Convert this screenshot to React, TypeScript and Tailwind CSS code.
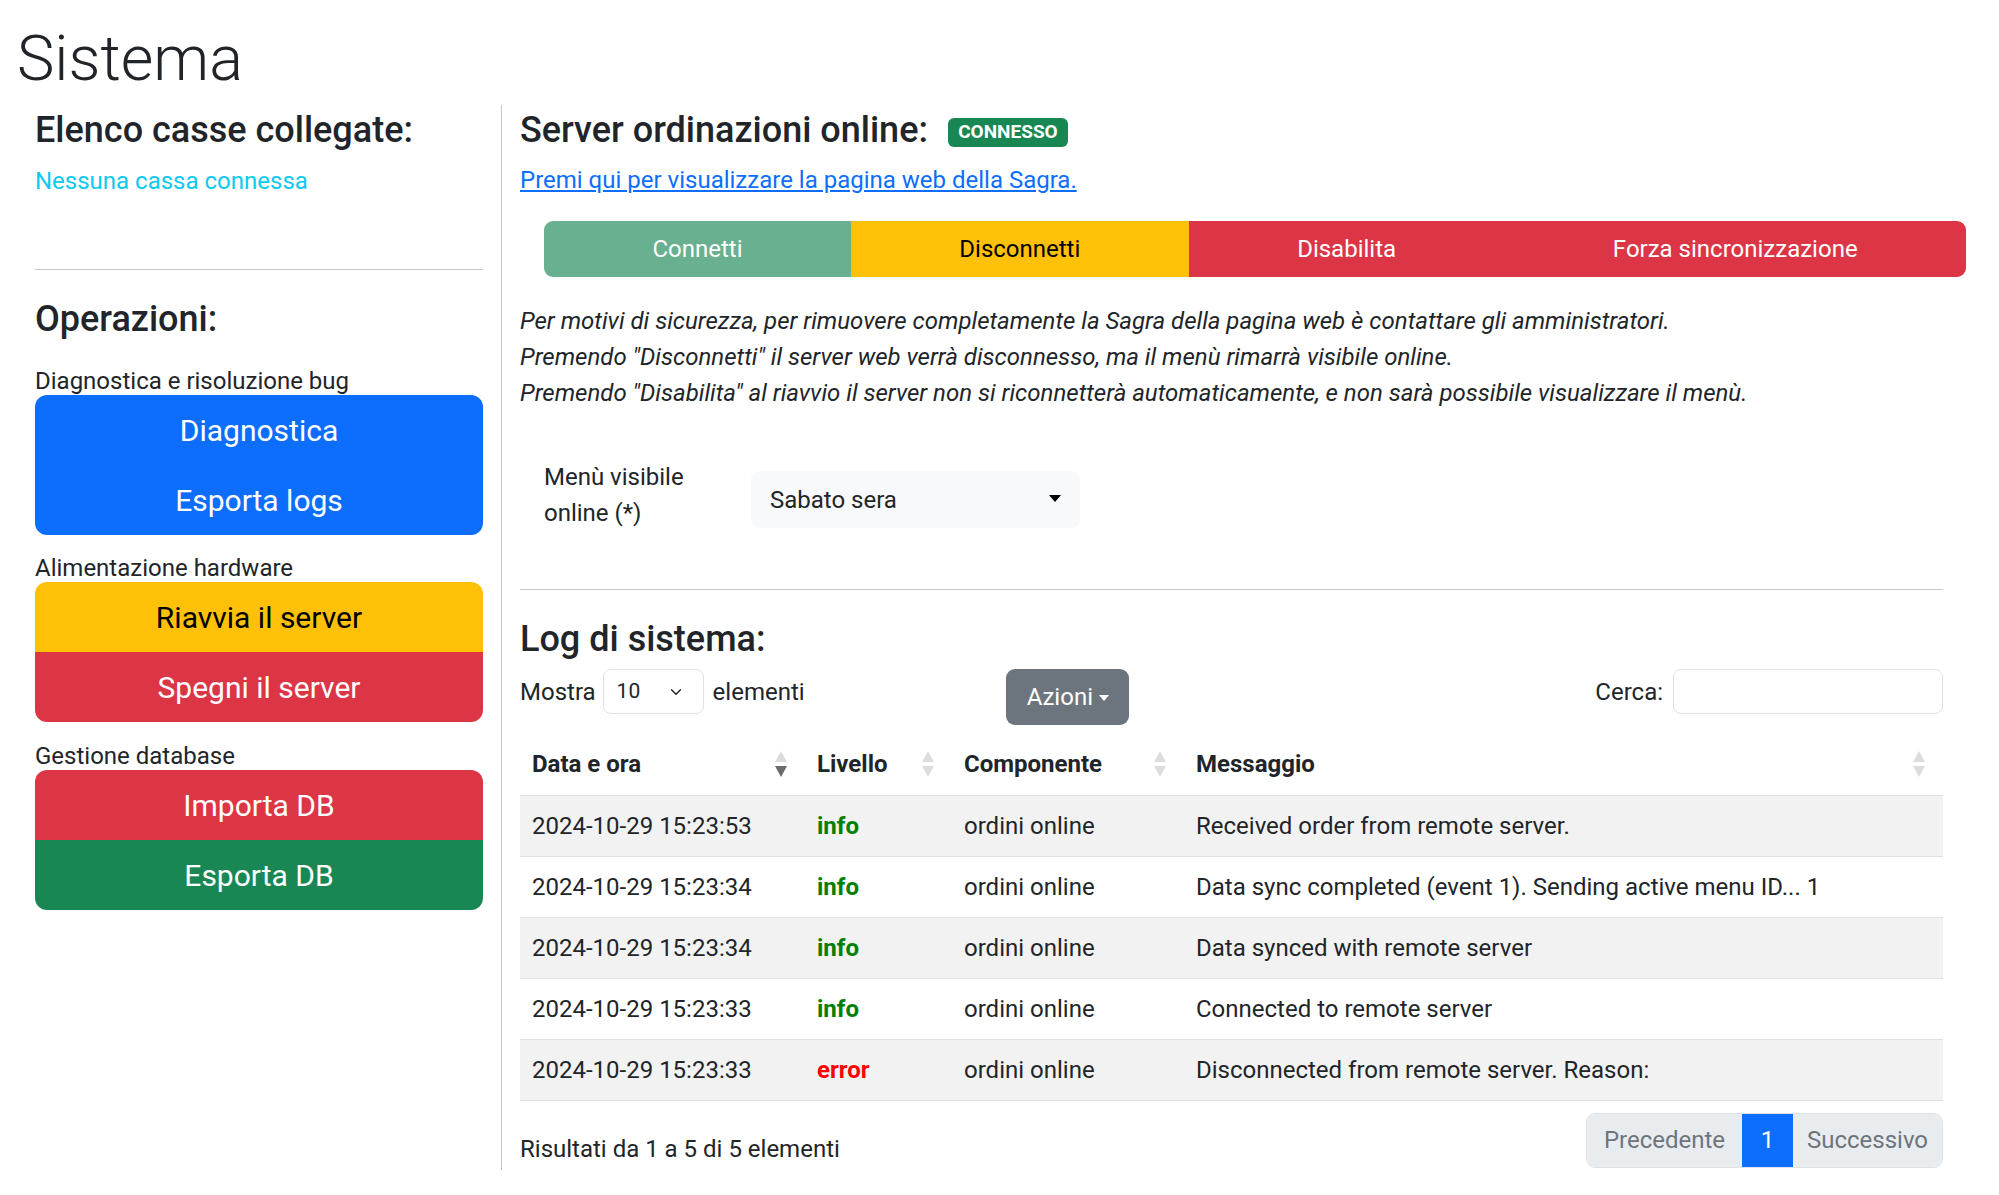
import { ChevronDown } from "lucide-react";

type Log = { ts: string; level: "info" | "error"; comp: string; msg: string };

const logs: Log[] = [
  { ts: "2024-10-29 15:23:53", level: "info", comp: "ordini online", msg: "Received order from remote server." },
  { ts: "2024-10-29 15:23:34", level: "info", comp: "ordini online", msg: "Data sync completed (event 1). Sending active menu ID... 1" },
  { ts: "2024-10-29 15:23:34", level: "info", comp: "ordini online", msg: "Data synced with remote server" },
  { ts: "2024-10-29 15:23:33", level: "info", comp: "ordini online", msg: "Connected to remote server" },
  { ts: "2024-10-29 15:23:33", level: "error", comp: "ordini online", msg: "Disconnected from remote server. Reason:" },
];

function SortIcon({ active = false }: { active?: boolean }) {
  return (
    <svg width="12" height="28" viewBox="0 0 12 28" className="shrink-0">
      <polygon points="6,1 12,12 0,12" fill="#dcdcdc" />
      <polygon points="0,16 12,16 6,27" fill={active ? "#6b6b6b" : "#dcdcdc"} />
    </svg>
  );
}

function Caret({ className = "" }: { className?: string }) {
  return (
    <svg width="12" height="7" viewBox="0 0 12 7" className={className}>
      <polygon points="0,0 12,0 6,7" fill="currentColor" />
    </svg>
  );
}

function GroupLabel({ children, className = "" }: { children: string; className?: string }) {
  return <div className={"text-[24px] leading-[28px] " + className}>{children}</div>;
}

export default function App() {
  return (
    <div className="min-h-[1195px] bg-white font-['Roboto',sans-serif] text-[24px] text-[#212529]">
      <div className="pt-[21px] pl-[17px]">
        <h1 className="text-[63px] font-light leading-[76px]">Sistema</h1>
      </div>

      <div className="mt-[8px] flex items-start">
        {/* colonna sinistra */}
        <div className="ml-[35px] w-[448px] shrink-0">
          <h3 className="mt-[4px] text-[36px] font-medium leading-[42px]">Elenco casse collegate:</h3>
          <p className="mt-[12px] leading-[36px] text-[#0dcaf0]">Nessuna cassa connessa</p>
          <hr className="mt-[70px] border-t border-[#c8c9ca]" />
          <h3 className="mt-[28px] text-[36px] font-medium leading-[42px]">Operazioni:</h3>

          <GroupLabel className="mt-[27px]">Diagnostica e risoluzione bug</GroupLabel>
          <div className="flex flex-col overflow-hidden rounded-[12px] text-[30px] text-white">
            <button className="h-[70px] bg-[#0d6efd]">Diagnostica</button>
            <button className="h-[70px] bg-[#0d6efd]">Esporta logs</button>
          </div>

          <GroupLabel className="mt-[19px]">Alimentazione hardware</GroupLabel>
          <div className="flex flex-col overflow-hidden rounded-[12px] text-[30px]">
            <button className="h-[70px] bg-[#ffc107] text-black">Riavvia il server</button>
            <button className="h-[70px] bg-[#dc3545] text-white">Spegni il server</button>
          </div>

          <GroupLabel className="mt-[20px]">Gestione database</GroupLabel>
          <div className="flex flex-col overflow-hidden rounded-[12px] text-[30px] text-white">
            <button className="h-[70px] bg-[#dc3545]">Importa DB</button>
            <button className="h-[70px] bg-[#198754]">Esporta DB</button>
          </div>
        </div>

        {/* colonna destra */}
        <div className="ml-[18px] w-[1442px] shrink-0 border-l border-[#c4c4c4] pb-[2px] pl-[18px]">
          <div className="mt-[4px] flex h-[42px] items-center gap-[20px]">
            <h3 className="text-[36px] font-medium leading-[42px]">Server ordinazioni online:</h3>
            <span className="mt-[4px] flex h-[29px] w-[120px] items-center justify-center rounded-[6px] bg-[#198754] text-[19px] font-bold uppercase text-white">
              Connesso
            </span>
          </div>
          <a href="#" className="mt-[11px] block w-fit leading-[36px] text-[#0d6efd] underline">
            Premi qui per visualizzare la pagina web della Sagra.
          </a>

          <div className="mt-[23px] mr-[-23px] ml-[24px] flex h-[56px] overflow-hidden rounded-[9px]">
            <button className="flex-auto bg-[#68b08f] px-[18px] text-white">Connetti</button>
            <button className="flex-auto bg-[#ffc107] px-[18px] text-black">Disconnetti</button>
            <button className="flex-auto bg-[#dc3545] px-[18px] text-white">Disabilita</button>
            <button className="flex-auto bg-[#dc3545] px-[18px] text-white">Forza sincronizzazione</button>
          </div>

          <div className="mt-[26px] italic leading-[36px]">
            <p>Per motivi di sicurezza, per rimuovere completamente la Sagra della pagina web è contattare gli amministratori.</p>
            <p>Premendo "Disconnetti" il server web verrà disconnesso, ma il menù rimarrà visibile online.</p>
            <p>Premendo "Disabilita" al riavvio il server non si riconnetterà automaticamente, e non sarà possibile visualizzare il menù.</p>
          </div>

          <div className="mt-[48px] flex items-start">
            <label className="ml-[24px] w-[207px] leading-[36px]">
              Menù visibile
              <br />
              online (*)
            </label>
            <div className="mt-[12px] flex h-[57px] w-[329px] items-center justify-between rounded-[9px] bg-[#f8f9fa] pr-[19px] pl-[19px]">
              <span>Sabato sera</span>
              <Caret className="mb-[3px] text-black" />
            </div>
          </div>

          <hr className="mt-[58px] border-t border-[#c8c9ca]" />
          <h3 className="mt-[28px] text-[36px] font-medium leading-[42px]">Log di sistema:</h3>

          <div className="mt-[9px] grid grid-cols-3 items-start">
            <div className="flex h-[45px] items-center">
              <span>Mostra</span>
              <div className="ml-[7px] flex h-[45px] w-[101px] items-center justify-between rounded-[8px] border border-[#dee2e6] pr-[18px] pl-[13px] text-[21px]">
                <span>10</span>
                <ChevronDown size={18} strokeWidth={2} />
              </div>
              <span className="ml-[9px]">elementi</span>
            </div>
            <div className="pl-[12px]">
              <button className="flex h-[56px] w-[123px] items-center justify-center gap-[6px] rounded-[9px] bg-[#6c757d] text-white">
                Azioni
                <Caret className="mt-[2px] h-[6px] w-[10px]" />
              </button>
            </div>
            <div className="flex h-[45px] items-center justify-end gap-[10px]">
              <span>Cerca:</span>
              <input className="h-[45px] w-[270px] rounded-[8px] border border-[#dee2e6] bg-white outline-none" />
            </div>
          </div>

          <table className="mt-[8px] w-full table-fixed border-collapse">
            <thead>
              <tr className="border-b border-[#dee2e6] font-bold">
                {[
                  ["Data e ora", "w-[285px]", true],
                  ["Livello", "w-[147px]", false],
                  ["Componente", "w-[232px]", false],
                  ["Messaggio", "", false],
                ].map(([label, w, active]) => (
                  <th key={label as string} className={"h-[62px] pr-[18px] pl-[12px] text-left " + w}>
                    <div className="flex items-center justify-between">
                      <span>{label}</span>
                      <SortIcon active={active as boolean} />
                    </div>
                  </th>
                ))}
              </tr>
            </thead>
            <tbody>
              {logs.map((l, i) => (
                <tr key={i} className={"border-b border-[#dee2e6] " + (i % 2 === 0 ? "bg-[#f2f2f2]" : "bg-white")}>
                  <td className="h-[61px] px-[12px]">{l.ts}</td>
                  <td className={"h-[61px] px-[12px] font-bold " + (l.level === "info" ? "text-[#008000]" : "text-[#ff0000]")}>
                    {l.level}
                  </td>
                  <td className="h-[61px] px-[12px]">{l.comp}</td>
                  <td className="h-[61px] px-[12px] whitespace-nowrap">{l.msg}</td>
                </tr>
              ))}
            </tbody>
          </table>

          <div className="mt-[12px] flex items-start justify-between">
            <div className="pt-[18px] leading-[36px]">Risultati da 1 a 5 di 5 elementi</div>
            <div className="flex h-[55px] overflow-hidden rounded-[9px] border border-[#dee2e6]">
              <span className="flex w-[155px] items-center justify-center bg-[#e9ecef] text-[#6c757d]">Precedente</span>
              <span className="flex w-[51px] items-center justify-center bg-[#0d6efd] text-white">1</span>
              <span className="flex w-[149px] items-center justify-center bg-[#e9ecef] text-[#6c757d]">Successivo</span>
            </div>
          </div>
        </div>
      </div>
    </div>
  );
}
